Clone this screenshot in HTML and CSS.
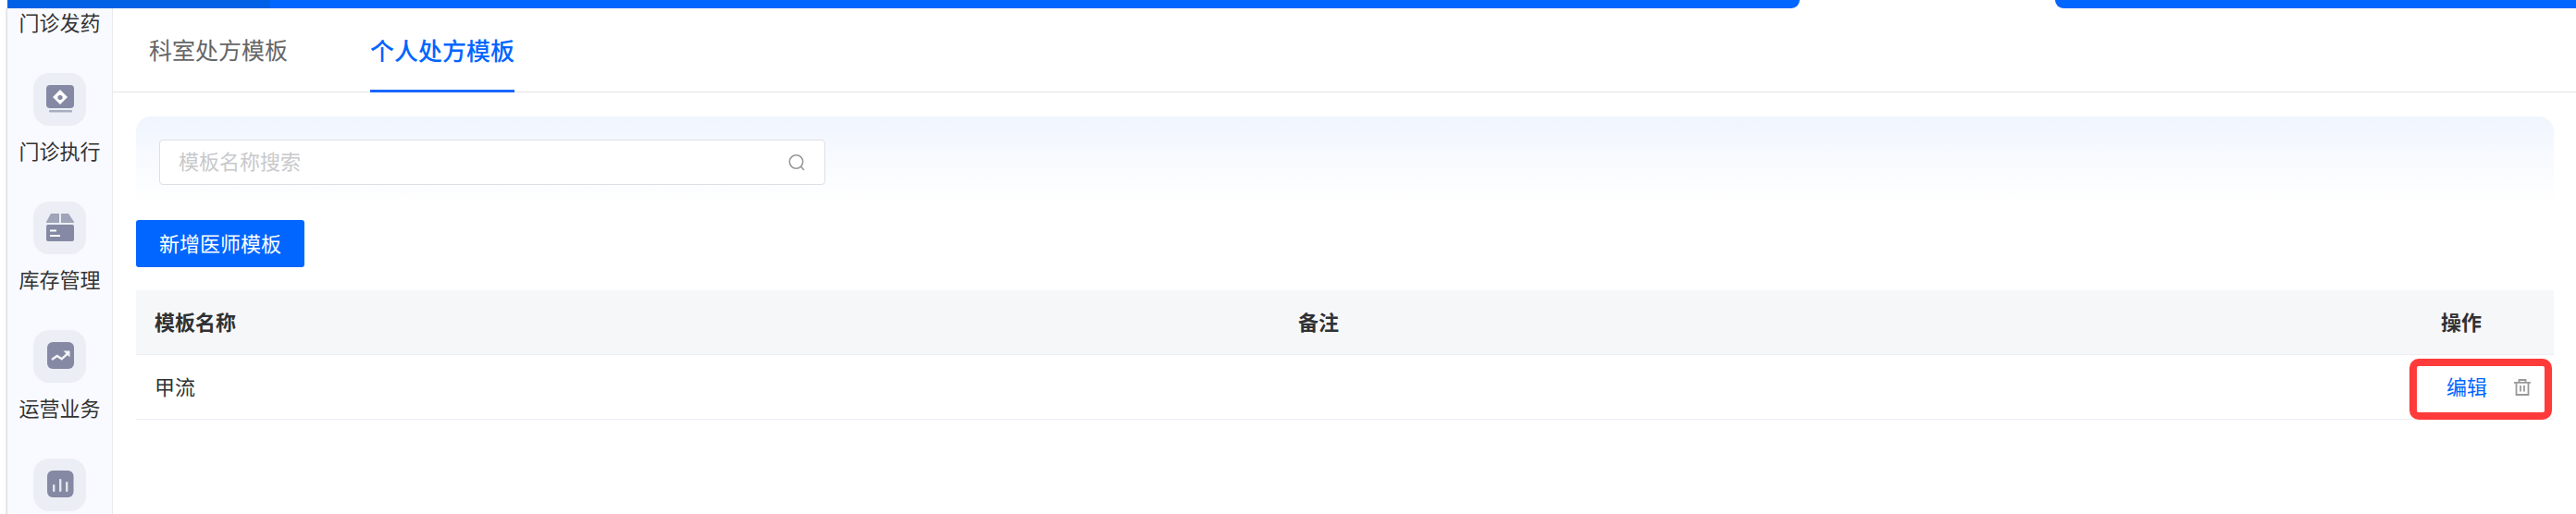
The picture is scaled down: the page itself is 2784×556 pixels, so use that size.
FILE: index.html
```html
<!DOCTYPE html>
<html lang="zh-CN">
<head>
  <meta charset="UTF-8">
  <title>个人处方模板</title>
  <link rel="stylesheet" href="styles.css">
</head>
<body>
  <div class="topbar">
    <div class="topbar-logo"></div>
    <div class="topbar-left"></div>
    <div class="topbar-gap"></div>
    <div class="topbar-right"></div>
  </div>

  <div class="main">
    <div class="sidebar">
      <div class="side-item">
        <div class="side-label">门诊发药</div>
      </div>
      <div class="side-item">
        <div class="side-tile">
          <svg class="side-icon" viewBox="0 0 57 57">
            <rect x="14" y="13" width="30" height="25" rx="4" fill="#8589a3"/>
            <path d="M29 18l8 8-8 8-8-8z" fill="#fff"/>
            <path d="M27.500 24h3v1h1v3h-1v1h-3v-1h-1v-3h1z" fill="#8589a3"/>
            <rect x="17" y="40" width="25" height="2.600" rx="1.300" fill="#a9adc0"/>
          </svg>
        </div>
        <div class="side-label">门诊执行</div>
      </div>
      <div class="side-item">
        <div class="side-tile">
          <svg class="side-icon" viewBox="0 0 57 57">
            <path d="M19 13h9v10H14v-1z" fill="#a0a4b9"/>
            <path d="M30 13h8l6 9v1H30z" fill="#a0a4b9"/>
            <rect x="14" y="25" width="30" height="18" rx="2" fill="#8589a3"/>
            <rect x="18" y="30.500" width="7" height="2" fill="#fff"/>
            <rect x="18" y="36" width="11" height="2" fill="#fff"/>
          </svg>
        </div>
        <div class="side-label">库存管理</div>
      </div>
      <div class="side-item">
        <div class="side-tile">
          <svg class="side-icon" viewBox="0 0 57 57">
            <rect x="15" y="13" width="29" height="29" rx="6" fill="#8589a3"/>
            <path d="M20 32l5.700-4 5 3.300 7.300-6.600" fill="none" stroke="#f3f4f8" stroke-width="2.400"/>
            <path d="M32.500 22.500h7v7z" fill="#f3f4f8"/>
          </svg>
        </div>
        <div class="side-label">运营业务</div>
      </div>
      <div class="side-item">
        <div class="side-tile">
          <svg class="side-icon" viewBox="0 0 57 57">
            <rect x="15" y="13" width="28.500" height="29" rx="6" fill="#8589a3"/>
            <rect x="21" y="28" width="2.400" height="8" rx="1" fill="#e4e6ee"/>
            <rect x="28" y="22" width="2.400" height="14" rx="1" fill="#e4e6ee"/>
            <rect x="35" y="25" width="2.400" height="11" rx="1" fill="#e4e6ee"/>
          </svg>
        </div>
      </div>
    </div>

    <div class="content">
      <div class="tabs">
        <div class="tab">科室处方模板</div>
        <div class="tab tab-active">个人处方模板</div>
      </div>

      <div class="search-panel">
        <div class="search-box">
          <input class="search-input" type="text" placeholder="模板名称搜索">
          <svg class="search-icon" viewBox="0 0 18 18">
            <circle cx="8.500" cy="8" r="7.200" fill="none" stroke="#999" stroke-width="1.600"/>
            <path d="M13.800 13.500l3.200 3.500" fill="none" stroke="#999" stroke-width="1.600"/>
          </svg>
        </div>
      </div>

      <button class="add-btn" type="button">新增医师模板</button>

      <table class="tpl-table">
        <colgroup>
          <col class="col-name">
          <col>
          <col class="col-ops">
        </colgroup>
        <thead>
          <tr>
            <th>模板名称</th>
            <th>备注</th>
            <th>操作</th>
          </tr>
        </thead>
        <tbody>
          <tr>
            <td>甲流</td>
            <td></td>
            <td class="ops-cell">
              <div class="ops">
                <a class="edit-link">编辑</a>
                <svg class="trash-icon" viewBox="0 0 18 18">
                  <path d="M0 3.800h18M5.500 3.500V1h7v2.500M2.500 3.800V17h13V3.800M7 7v6.500M11 7v6.500" fill="none" stroke="#999" stroke-width="1.800"/>
                </svg>
              </div>
              <div class="red-mark"></div>
            </td>
          </tr>
        </tbody>
      </table>
    </div>
  </div>
</body>
</html>
```

FILE: styles.css
```css
html, body {
  height: 100%;
}
body {
  margin: 0;
  padding-left: 8px;
  box-sizing: border-box;
  height: 556px;
  overflow: hidden;
  background: #fff;
  display: flex;
  flex-direction: column;
  font-family: "Noto Sans CJK SC", "Noto Sans", sans-serif;
  position: relative;
}
body::before {
  content: "";
  position: absolute;
  left: 6px;
  top: 9px;
  bottom: 0;
  width: 2px;
  background: linear-gradient(to right, #f0f0f2, #dcdce0);
}

/* top strip, mostly cut off by the crop */
.topbar {
  height: 9px;
  display: flex;
  flex: none;
}
.topbar-logo {
  width: 284px;
  background: #0060e6;
}
.topbar-left {
  width: 1653px;
  background: #0066ff;
  border-bottom-right-radius: 12px;
}
.topbar-gap {
  width: 276px;
}
.topbar-right {
  flex: 1;
  background: #0066ff;
  border-bottom-left-radius: 12px;
}

.main {
  flex: 1;
  display: flex;
  min-height: 0;
}

.sidebar {
  width: 113px;
  flex: none;
  background: #f9faff;
  border-right: 1px solid #e9e9ee;
  display: flex;
  flex-direction: column;
  align-items: center;
  gap: 43px;
  padding-top: 1px;
}
.side-item {
  display: flex;
  flex-direction: column;
  align-items: center;
  gap: 13px;
  flex: none;
}
.side-tile {
  width: 57px;
  height: 57px;
  background: #ebeef5;
  border-radius: 17px;
}
.side-icon {
  display: block;
  width: 57px;
  height: 57px;
}
.side-label {
  font-size: 22px;
  line-height: 26px;
  color: #333;
  white-space: nowrap;
}

.content {
  flex: 1;
  min-width: 0;
  display: flex;
  flex-direction: column;
  align-items: flex-start;
}

.tabs {
  align-self: stretch;
  height: 90px;
  flex: none;
  border-bottom: 1px solid #e5e5e5;
  display: flex;
  gap: 89px;
  padding-left: 39px;
}
.tab {
  height: 91px;
  box-sizing: border-box;
  padding-top: 28px;
  font-size: 25px;
  line-height: 33px;
  color: #666;
  white-space: nowrap;
}
.tab-active {
  color: #0066ff;
  font-size: 26px;
  font-weight: 500;
  border-bottom: 3px solid #1a66ff;
}

.search-panel {
  align-self: stretch;
  margin: 26px 24px 0 25px;
  padding: 25px;
  height: 94px;
  box-sizing: border-box;
  border-radius: 16px 16px 0 0;
  background: linear-gradient(to bottom, #f0f5fe, #fff);
}
.search-box {
  width: 720px;
  height: 49px;
  box-sizing: border-box;
  display: flex;
  align-items: center;
  padding: 0 21px 0 20px;
  background: #fff;
  border: 1px solid #dcdfe6;
  border-radius: 4px;
}
.search-input {
  flex: 1;
  min-width: 0;
  border: none;
  outline: none;
  padding: 0 0 6px;
  font-family: inherit;
  font-size: 22px;
  color: #333;
  background: transparent;
}
.search-input::placeholder {
  color: #c8c9cc;
}
.search-icon {
  width: 18px;
  height: 18px;
  flex: none;
}

.add-btn {
  margin: 18px 0 0 25px;
  width: 182px;
  height: 51px;
  padding: 0 0 4px;
  border: none;
  border-radius: 3px;
  background: #0066ff;
  color: #fff;
  font-family: inherit;
  font-size: 22px;
}

.tpl-table {
  align-self: stretch;
  margin: 25px 24px 0 25px;
  border-collapse: collapse;
  table-layout: fixed;
  font-size: 22px;
  color: #303133;
}
.col-name {
  width: 1236px;
}
.col-ops {
  width: 142px;
}
.tpl-table th {
  height: 65px;
  padding: 0 0 4px 20px;
  background: #f6f7f9;
  border-bottom: 1px solid #ebeef5;
  text-align: left;
  font-weight: 600;
}
.tpl-table td {
  height: 65px;
  padding: 0 0 4px 20px;
  border-bottom: 1px solid #ebeef5;
}
.tpl-table td.ops-cell {
  position: relative;
  padding-left: 26px;
}
.ops {
  display: flex;
  align-items: center;
  gap: 29px;
}
.edit-link {
  color: #0066ff;
}
.trash-icon {
  width: 18px;
  height: 18px;
  flex: none;
  margin-top: 5px;
}
.red-mark {
  position: absolute;
  left: -14px;
  top: 4px;
  width: 154px;
  height: 66px;
  box-sizing: border-box;
  border: 8px solid #ff3a3a;
  border-radius: 10px;
}
```
